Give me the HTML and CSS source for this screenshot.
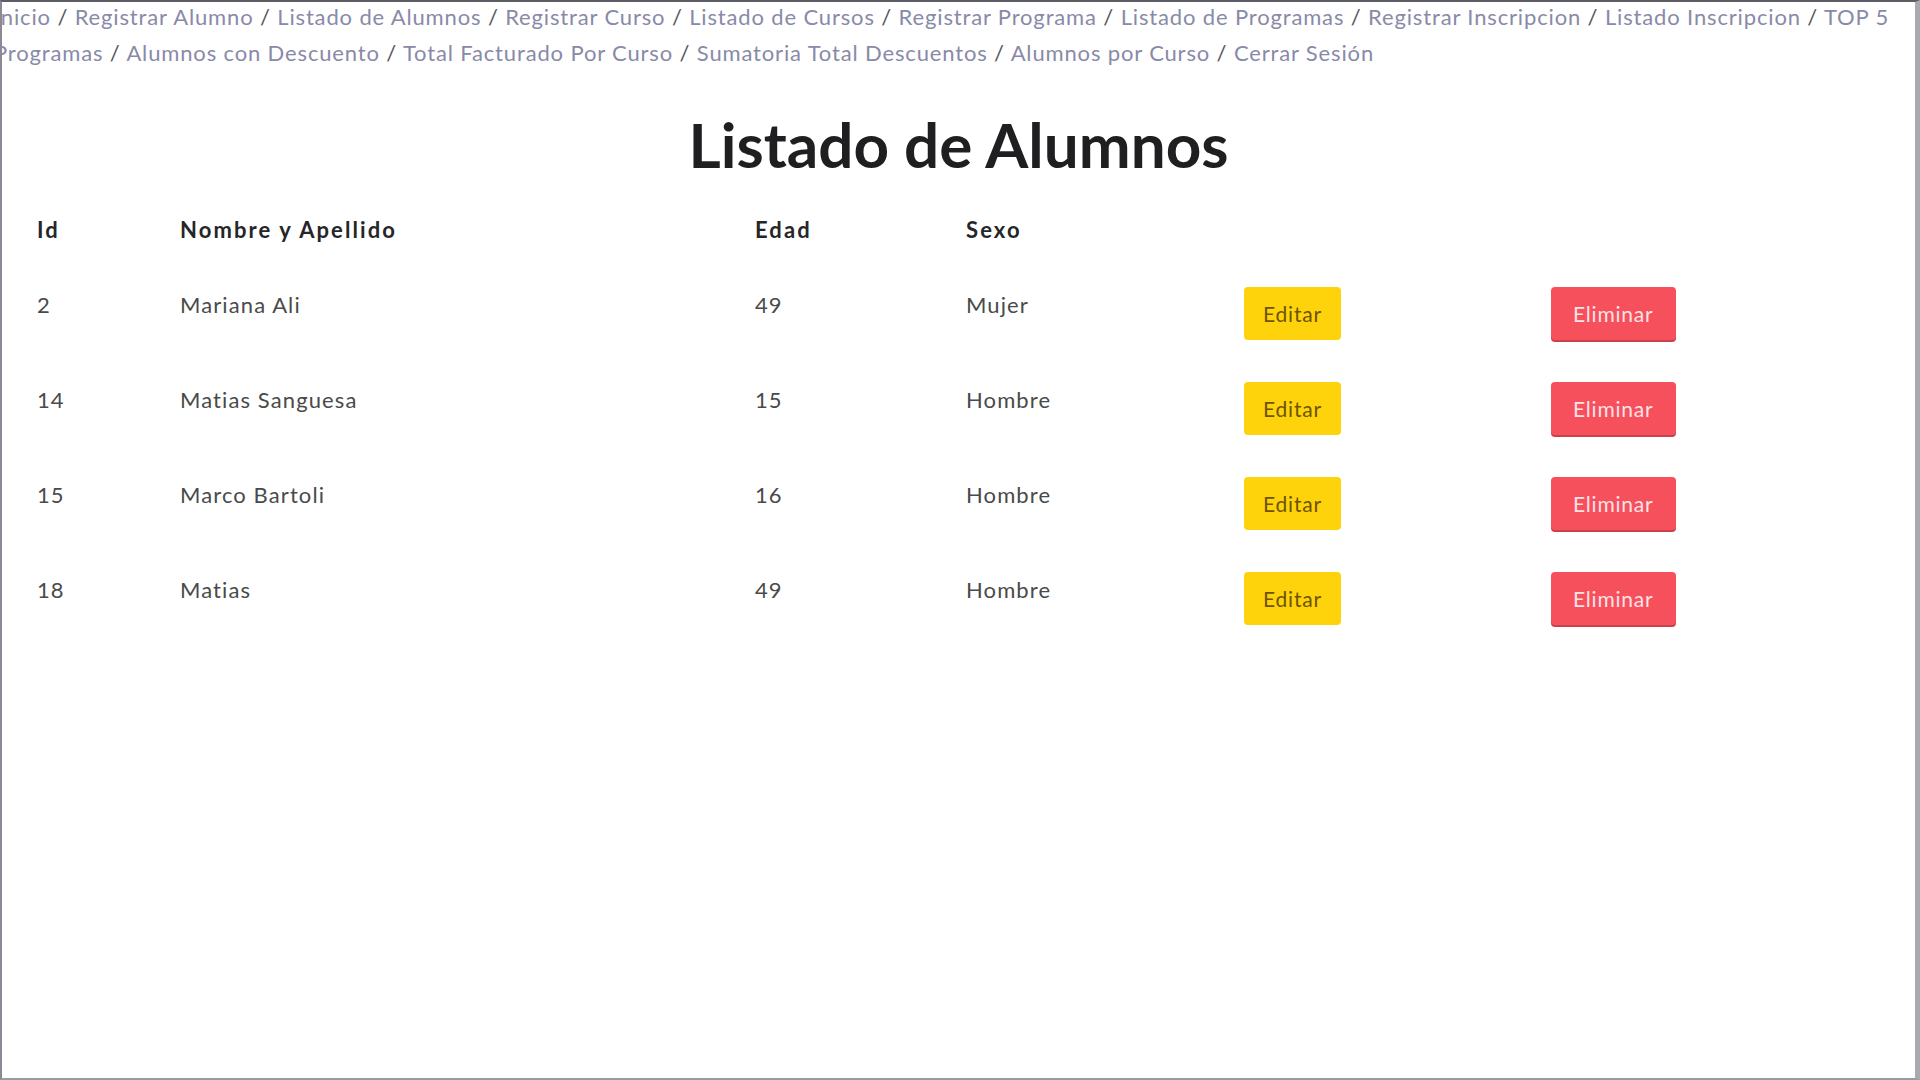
FILE: index.html
```html
<!DOCTYPE html>
<html lang="es">
<head>
<meta charset="utf-8">
<title>Listado de Alumnos</title>
<link rel="stylesheet" href="styles.css">
</head>
<body>
<div class="frame">
  <nav class="nav">
    <a href="#">Inicio</a> / <a href="#">Registrar Alumno</a> / <a href="#">Listado de Alumnos</a> / <a href="#">Registrar Curso</a> / <a href="#">Listado de Cursos</a> / <a href="#">Registrar Programa</a> / <a href="#">Listado de Programas</a> / <a href="#">Registrar Inscripcion</a> / <a href="#">Listado Inscripcion</a> / <a href="#top5">TOP 5</a> <a href="#top5">Programas</a> / <a href="#">Alumnos con Descuento</a> / <a href="#">Total Facturado Por Curso</a> / <a href="#">Sumatoria Total Descuentos</a> / <a href="#">Alumnos por Curso</a> / <a href="#">Cerrar Sesión</a>
  </nav>
  <h1 class="title">Listado de Alumnos</h1>
  <table class="tabla">
    <colgroup>
      <col class="c-id"><col class="c-nombre"><col class="c-edad"><col class="c-sexo"><col class="c-editar"><col class="c-eliminar">
    </colgroup>
    <thead>
      <tr><th>Id</th><th>Nombre y Apellido</th><th>Edad</th><th>Sexo</th><th></th><th></th></tr>
    </thead>
    <tbody>
      <tr><td>2</td><td>Mariana Ali</td><td>49</td><td>Mujer</td><td><button class="btn btn-edit">Editar</button></td><td><button class="btn btn-del">Eliminar</button></td></tr>
      <tr><td>14</td><td>Matias Sanguesa</td><td>15</td><td>Hombre</td><td><button class="btn btn-edit">Editar</button></td><td><button class="btn btn-del">Eliminar</button></td></tr>
      <tr><td>15</td><td>Marco Bartoli</td><td>16</td><td>Hombre</td><td><button class="btn btn-edit">Editar</button></td><td><button class="btn btn-del">Eliminar</button></td></tr>
      <tr><td>18</td><td>Matias</td><td>49</td><td>Hombre</td><td><button class="btn btn-edit">Editar</button></td><td><button class="btn btn-del">Eliminar</button></td></tr>
    </tbody>
  </table>
</div>
</body>
</html>
```
FILE: styles.css
```css
html, body {
  margin: 0;
  padding: 0;
  background: #ffffff;
}
body {
  font-family: Lato, "Liberation Sans", sans-serif;
  color: #3c3c3c;
  overflow: hidden;
}
.frame {
  box-sizing: border-box;
  width: 1920px;
  height: 1080px;
  border-top: 2px solid #5c5c64;
  border-left: 2px solid #8a8a94;
  border-right: 5px solid #a9a9b0;
  border-bottom: 2px solid #9a9aa2;
  overflow: hidden;
}
.nav {
  margin-left: -8px;
  margin-top: -3px;
  padding-right: 12px;
  font-size: 22px;
  letter-spacing: 0.85px;
  line-height: 36px;
  color: #55555c;
}
.nav a {
  color: #888aa8;
  text-decoration: none;
}
.title {
  margin: 36px 0 12px;
  text-align: center;
  font-size: 62px;
  line-height: 1.2;
  font-weight: 700;
  color: #1f1f22;
}
.tabla {
  margin-left: 19px;
  border-collapse: collapse;
  table-layout: fixed;
  width: 1878px;
  font-size: 22px;
  line-height: 31px;
}
.c-id { width: 143px; }
.c-nombre { width: 575px; }
.c-edad { width: 211px; }
.c-sexo { width: 278px; }
.c-editar { width: 307px; }
.c-eliminar { width: 364px; }
.tabla th, .tabla td {
  padding: 21px 16px;
  text-align: left;
  vertical-align: top;
}
.tabla th {
  font-weight: 700;
  letter-spacing: 2.1px;
  color: #262628;
}
.tabla td {
  line-height: 36px;
  letter-spacing: 1.1px;
  color: #4a4a4a;
}
.btn {
  display: inline-block;
  vertical-align: top;
  font-family: Lato, "Liberation Sans", sans-serif;
  font-size: 21px;
  line-height: 31px;
  letter-spacing: 0.8px;
  padding: 11px 19px;
  border: 0;
  border-radius: 4px;
}
.btn-edit {
  background: #ffd30c;
  color: #6d5400;
}
.btn-del {
  padding: 11px 22px;
  background: #f6505c;
  color: #ffe3e6;
  box-shadow: 0 2px 0 #c9414c;
}
```
